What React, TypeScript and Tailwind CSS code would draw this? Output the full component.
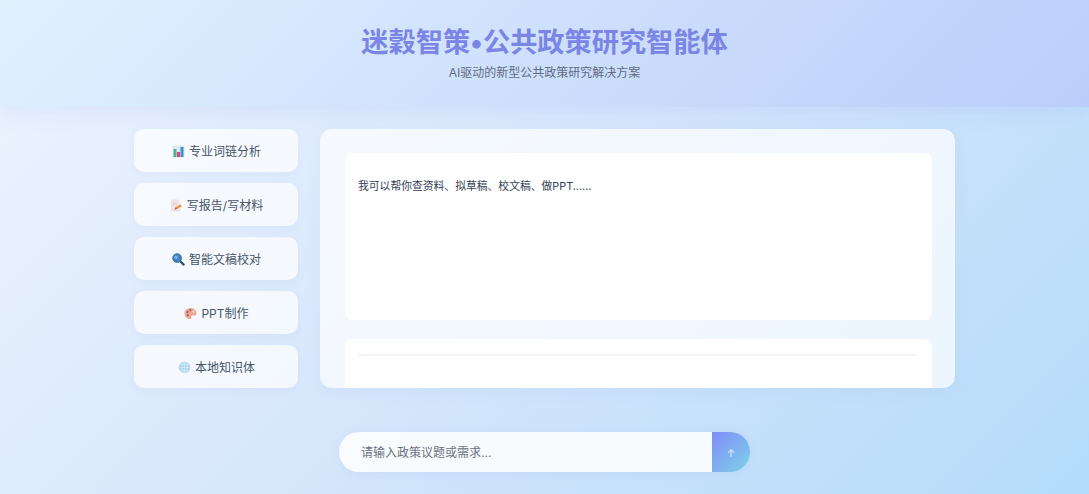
const menuItems = [
  { label: "专业词链分析", icon: <ChartIcon /> },
  { label: "写报告/写材料", icon: <MemoIcon /> },
  { label: "智能文稿校对", icon: <SearchIcon /> },
  { label: "PPT制作", icon: <PaletteIcon /> },
  { label: "本地知识体", icon: <GlobeIcon /> },
];

function ChartIcon() {
  return (
    <svg width="13" height="13" viewBox="0 0 13 13">
      <rect x="0.5" y="0.5" width="12" height="12" rx="1" fill="#dfe8ee" />
      <rect x="1.5" y="4" width="3" height="8" fill="#4fb58f" />
      <rect x="5" y="7" width="3" height="5" fill="#d9487d" />
      <rect x="8.5" y="2" width="3" height="10" fill="#3f8fc9" />
    </svg>
  );
}

function MemoIcon() {
  return (
    <svg width="13" height="13" viewBox="0 0 14 14">
      <path d="M1.500 1h7l2 2V13h-9z" fill="#eee6e2" stroke="#dcd5d2" strokeWidth="0.5" />
      <path d="M3 4.500h5M3 6.500h4" stroke="#cfcbcd" strokeWidth="0.8" />
      <path d="M5 11.500l1-2.500 5-3 2 1.500-5 3z" fill="#e8913f" />
      <path d="M5 11.500l1-2.500 1.500 1.500z" fill="#c4573d" />
    </svg>
  );
}

function SearchIcon() {
  return (
    <svg width="13" height="13" viewBox="0 0 14 14">
      <path d="M8.500 8.500l4 4" stroke="#31566f" strokeWidth="2.400" strokeLinecap="round" />
      <circle cx="5.500" cy="5.500" r="4.700" fill="#3f86c8" stroke="#2e5d86" strokeWidth="0.8" />
      <circle cx="4.500" cy="4.500" r="1.800" fill="#7fb7e6" />
    </svg>
  );
}

function PaletteIcon() {
  return (
    <svg width="13" height="13" viewBox="0 0 13 13">
      <path d="M6.500 1C3 1 .5 3.400.5 6.500S3 12 6 12c1.500 0 1.500-1 1.100-1.800-.4-.9.200-1.700 1.200-1.700h2.200c1.200 0 2-.8 2-2C12.500 3.200 10 1 6.500 1z" fill="#eba793" />
      <circle cx="3.500" cy="5" r="1" fill="#a34d48" />
      <circle cx="6.300" cy="3.300" r="1" fill="#8f5a50" />
      <circle cx="3.800" cy="8.300" r="1" fill="#a34d48" />
      <circle cx="9.500" cy="4.600" r="1" fill="#f4e3dc" />
    </svg>
  );
}

function GlobeIcon() {
  return (
    <svg width="13" height="13" viewBox="0 0 13 13" fill="none">
      <circle cx="6.500" cy="6.500" r="5.800" fill="#a9d3f2" />
      <ellipse cx="6.500" cy="6.500" rx="2.600" ry="5.800" stroke="#dcedf9" strokeWidth="0.7" />
      <path d="M.7 6.500h11.600M1.500 3.700h10M1.500 9.300h10M6.500.7v11.600" stroke="#dcedf9" strokeWidth="0.7" />
    </svg>
  );
}

export default function App() {
  return (
    <div className="flex h-[494px] w-[1089px] flex-col overflow-hidden bg-[linear-gradient(135deg,#eef4fe_0%,#d5e6fb_50%,#b3dbfa_100%)] font-['Inter','Noto_Sans_CJK_SC',sans-serif]">
      <header className="flex h-[107px] flex-col items-center bg-[linear-gradient(135deg,#e0f2fe_0%,#bccdfb_100%)] pt-[25px] shadow-[0_4px_20px_rgba(129,140,248,0.15)]">
        <h1 className="text-[27.200px] leading-[36px] font-bold text-[#7b85e6]">迷穀智策•公共政策研究智能体</h1>
        <p className="mt-[3px] text-[12px] leading-[18px] text-[#5f6b7e]">AI驱动的新型公共政策研究解决方案</p>
      </header>

      <main className="mx-auto mt-[22px] flex h-[259px] w-[821px] gap-[22px]">
        <nav className="flex w-[164px] shrink-0 flex-col gap-[11px]">
          {menuItems.map((item) => (
            <button
              key={item.label}
              type="button"
              className="flex h-[43px] items-center justify-center gap-[4px] rounded-[10px] bg-white/70 pt-[2px] pl-[1px] text-[12px] text-[#475569] shadow-[0_2px_8px_rgba(129,140,248,0.08)]"
            >
              {item.icon}
              <span>{item.label}</span>
            </button>
          ))}
        </nav>

        <section className="flex min-w-0 flex-1 flex-col gap-[19px] overflow-hidden rounded-[12px] bg-white/70 pt-[24px] pr-[23px] pl-[25px] shadow-[0_4px_16px_rgba(129,140,248,0.08)]">
          <div className="h-[167px] shrink-0 rounded-[8px] bg-white pt-[25px] pr-[14px] pl-[13px] text-[10.800px] leading-[18px] text-[#334155]">
            我可以帮你查资料、拟草稿、校文稿、做PPT......
          </div>
          <div className="h-[60px] shrink-0 rounded-[8px] bg-white pt-[15px] pr-[15px] pl-[13px]">
            <div className="h-[2px] bg-[#f1f5f9]" />
          </div>
        </section>
      </main>

      <form className="mx-auto mt-[44px] flex h-[40px] w-[411px] overflow-hidden rounded-[20px] shadow-[0_2px_10px_rgba(129,140,248,0.12)]">
        <input
          type="text"
          placeholder="请输入政策议题或需求..."
          className="min-w-0 flex-1 bg-white/85 pt-[2px] pl-[22px] text-[12px] text-[#334155] outline-none placeholder:text-[#6b7280]"
        />
        <button
          type="button"
          className="flex w-[38px] items-center justify-center bg-[linear-gradient(135deg,#818cf8,#7dd3e8)] pt-[2px] text-[10px] text-white/80"
        >
          ↑
        </button>
      </form>
    </div>
  );
}
